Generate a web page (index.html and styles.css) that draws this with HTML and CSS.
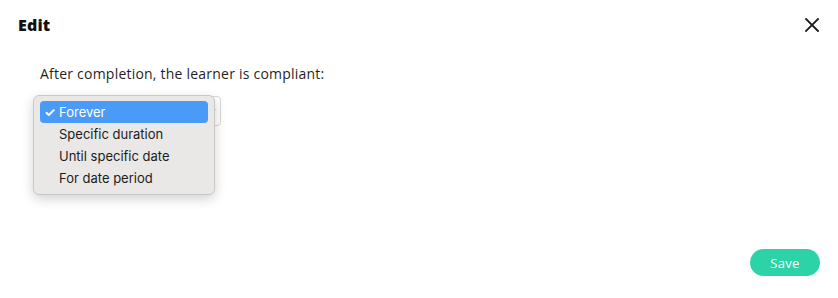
FILE: index.html
```html
<!DOCTYPE html>
<html>
<head>
<meta charset="utf-8">
<link rel="stylesheet" href="styles.css">
</head>
<body>
<div class="modal">
  <header class="header">
    <h1 class="title">Edit</h1>
    <button class="close" aria-label="Close">
      <svg width="14" height="14" viewBox="0 0 14 14"><path d="M1 1L13 13M13 1L1 13" stroke="#1a1a1a" stroke-width="1.8" stroke-linecap="square"/></svg>
    </button>
  </header>
  <div class="body">
    <p class="label">After completion, the learner is compliant:</p>
    <div class="select-wrap">
      <div class="select"><span class="chev"></span></div>
      <ul class="menu">
        <li class="item active"><span class="check">✓</span>Forever</li>
        <li class="item">Specific duration</li>
        <li class="item">Until specific date</li>
        <li class="item">For date period</li>
      </ul>
    </div>
  </div>
  <footer class="footer">
    <button class="save">Save</button>
  </footer>
</div>
</body>
</html>
```
FILE: styles.css
```css
* { box-sizing: border-box; }
html, body { margin: 0; padding: 0; background: #fff; }
body { width: 838px; height: 298px; font-family: "Open Sans", "Noto Sans", sans-serif; color: #1f1f1f; }
.modal { display: flex; flex-direction: column; height: 298px; padding: 0 18px 0 18px; }
.header { display: flex; justify-content: space-between; align-items: center; height: 50px; }
.title { margin: 0; font-size: 16px; font-weight: 800; color: #111; letter-spacing: 0.2px; }
.close { border: 0; background: none; padding: 0; margin-right: 1px; width: 14px; height: 14px; display: flex; }
.body { padding-left: 22px; flex: 1; }
.label { margin: 15px 0 0 0; font-size: 14px; line-height: 18px; color: #1f1f1f; letter-spacing: 0.22px; }
.select-wrap { position: relative; margin-top: 13px; margin-left: -5px; width: 186px; height: 30px; }
.select { width: 186px; height: 30px; border: 1px solid #d8d8d8; border-radius: 4px; background: #fff; position: relative; }
.chev { position: absolute; right: 4px; top: 13px; width: 4px; height: 2px; border-top: 1.5px solid #222; transform: rotate(-45deg); }
.menu { position: absolute; left: -2px; top: -1px; width: 182px; margin: 0; padding: 5px 6px 5px 6px; list-style: none; background: #e9e8e6; border: 1px solid #c9c8c6; border-radius: 6px; box-shadow: 0 4px 12px rgba(0,0,0,0.18); font-family: "Inter", "Liberation Sans", sans-serif; font-size: 13px; color: #1c1c1c; }
.item { height: 22px; line-height: 22px; padding-left: 19px; border-radius: 4px; position: relative; }
.item.active { background: #4a9bf8; color: #fff; }
.check { position: absolute; left: 4px; top: 0; font-size: 13px; font-weight: 700; }
.footer { display: flex; justify-content: flex-end; padding-bottom: 22px; }
.save { width: 70px; height: 27px; border: 0; border-radius: 14px; background: #2bd3a6; color: #fff; font-family: "Open Sans", sans-serif; font-size: 13px; font-weight: 500; padding: 0; letter-spacing: 0.3px; }
```
